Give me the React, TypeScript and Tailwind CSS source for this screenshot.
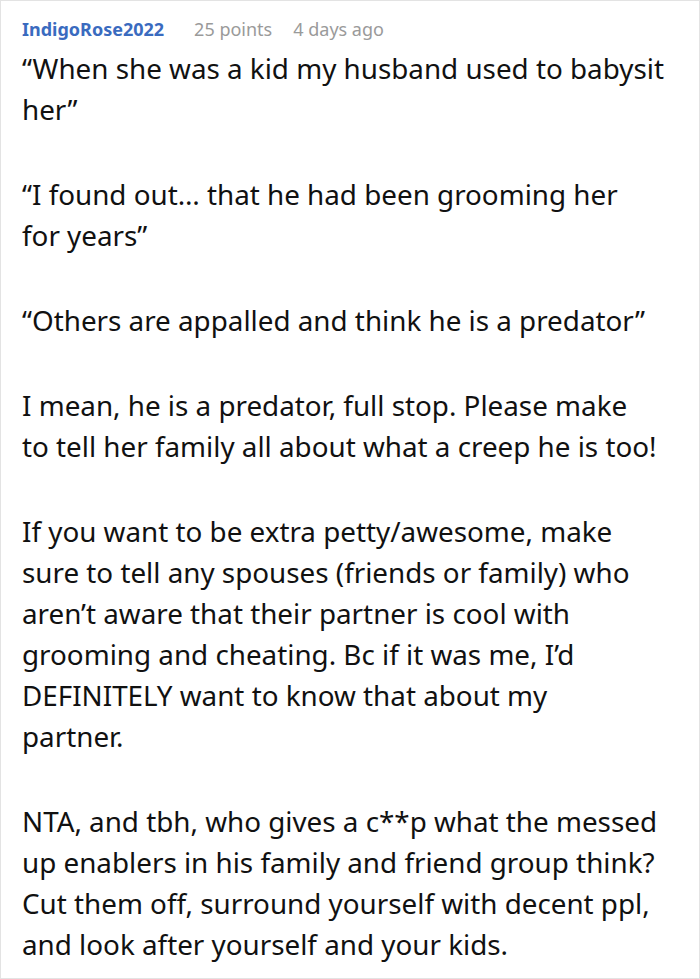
import React from "react";

const paragraphs: string[][] = [
  ["“When she was a kid my husband used to babysit", "her”"],
  ["“I found out… that he had been grooming her", "for years”"],
  ["“Others are appalled and think he is a predator”"],
  [
    "I mean, he is a predator, full stop. Please make",
    "to tell her family all about what a creep he is too!",
  ],
  [
    "If you want to be extra petty/awesome, make",
    "sure to tell any spouses (friends or family) who",
    "aren’t aware that their partner is cool with",
    "grooming and cheating. Bc if it was me, I’d",
    "DEFINITELY want to know that about my",
    "partner.",
  ],
  [
    "NTA, and tbh, who gives a c**p what the messed",
    "up enablers in his family and friend group think?",
    "Cut them off, surround yourself with decent ppl,",
    "and look after yourself and your kids.",
  ],
];

export default function App() {
  return (
    <div
      className="w-[700px] h-[979px] bg-white border border-[#e3e3e3] overflow-hidden"
      style={{ fontFamily: '"Noto Sans", sans-serif' }}
    >
      <div className="pl-[21px] pr-[8px] pt-[16px]">
        <div className="flex items-baseline text-[18px] leading-[24px]">
          <span className="font-bold text-[#3a6bbf]">IndigoRose2022</span>
          <span className="ml-[30px] text-[#9a9a9a]">25 points</span>
          <span className="ml-[21px] text-[#9a9a9a]">4 days ago</span>
        </div>
        <div className="mt-[7px] text-[27.8px] leading-[41px] text-[#111]">
          {paragraphs.map((lines, i) => (
            <p key={i} className={i === 0 ? "" : "mt-[44px]"}>
              {lines.map((l, j) => (
                <span key={j} className="block whitespace-nowrap">
                  {l}
                </span>
              ))}
            </p>
          ))}
        </div>
      </div>
    </div>
  );
}
